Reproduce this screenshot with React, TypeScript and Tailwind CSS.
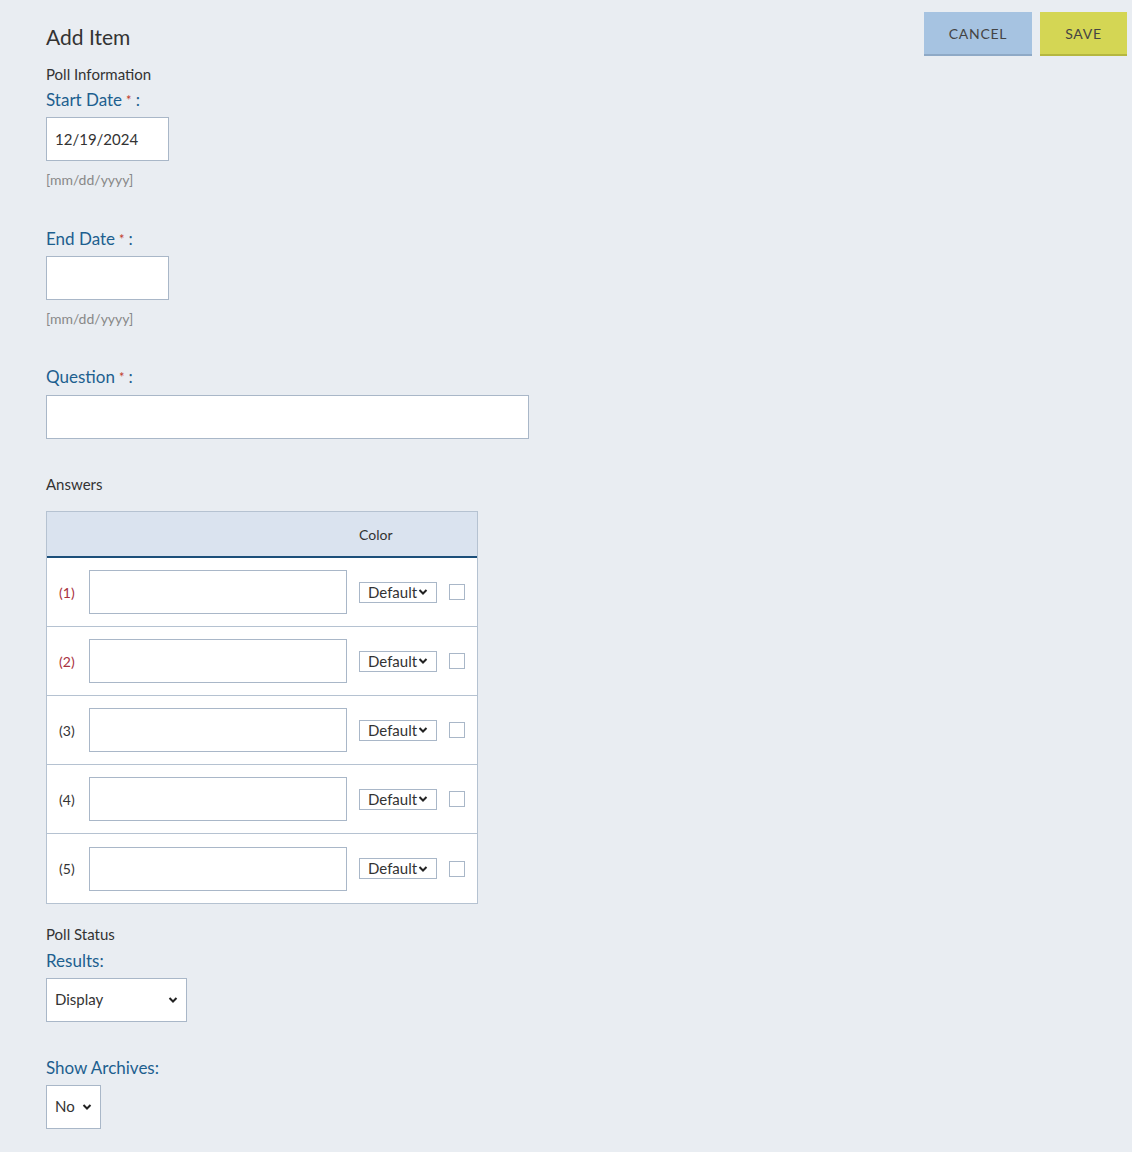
import React from "react";

const rows = [1, 2, 3, 4, 5];

function Label({ text, req }: { text: string; req?: boolean }) {
  return (
    <div className="text-[17px] leading-6 text-[#1d5f8f]">
      {text}
      {req && <span className="text-[#c0392b] text-[13px] align-top ml-1">*</span>}
      {req ? <span className="ml-1">:</span> : null}
    </div>
  );
}

export default function App() {
  return (
    <div className="min-h-[1152px] bg-[#e9edf2] text-[#333] pl-[46px] pr-[5px]" style={{ fontFamily: "Lato, 'Open Sans', sans-serif" }}>
      <div className="flex justify-between items-start pt-3">
        <h1 className="text-[21px] mt-[9px] text-[#333]">Add Item</h1>
        <div className="flex gap-2">
          <button className="w-[108px] h-11 bg-[#a6c3e1] border-b-2 border-[#8ea9c6] text-[14px] tracking-wider text-[#444]">CANCEL</button>
          <button className="w-[87px] h-11 bg-[#d4d654] border-b-2 border-[#b5b740] text-[14px] tracking-wider text-[#444]">SAVE</button>
        </div>
      </div>

      <div className="text-[15px] mt-[7px]">Poll Information</div>
      <div className="mt-[2px]"><Label text="Start Date" req /></div>
      <input defaultValue="12/19/2024" className="mt-[5px] block w-[123px] h-11 bg-white border border-[#a9b7c8] px-2 text-[15px] text-[#333]" />
      <div className="text-[14px] text-[#888] mt-2">[mm/dd/yyyy]</div>

      <div className="mt-[37px]"><Label text="End Date" req /></div>
      <input className="mt-[5px] block w-[123px] h-11 bg-white border border-[#a9b7c8]" />
      <div className="text-[14px] text-[#888] mt-2">[mm/dd/yyyy]</div>

      <div className="mt-[36px]"><Label text="Question" req /></div>
      <input className="mt-[6px] block w-[483px] h-11 bg-white border border-[#a9b7c8]" />

      <div className="text-[15px] mt-[34px]">Answers</div>
      <div className="mt-[16px] w-[432px] border border-[#b5c2d1] bg-white">
        <div className="h-[46px] bg-[#dae3ef] border-b-2 border-[#1c4f7a] flex items-center pl-[312px] text-[14px] text-[#333]">Color</div>
        {rows.map((n, i) => (
          <div key={n} className={`h-[69px] flex items-center ${i < 4 ? "border-b border-[#b5c2d1]" : ""}`}>
            <span className={`w-[42px] pl-3 text-[14px] ${n <= 2 ? "text-[#a8323e]" : "text-[#333]"}`}>({n})</span>
            <input className="w-[258px] h-11 border border-[#a9b7c8]" />
            <div className="ml-3 w-[78px] h-[21px] border border-[#a9b7c8] flex items-center justify-between px-2 text-[15px] text-[#333]">
              Default
              <svg width="10" height="8" viewBox="0 0 10 8"><path d="M1.5 2l3.5 3.5L8.5 2" stroke="#222" strokeWidth="2" fill="none" /></svg>
            </div>
            <div className="ml-3 w-4 h-4 border border-[#a9b7c8]" />
          </div>
        ))}
      </div>

      <div className="text-[15px] mt-[19px]">Poll Status</div>
      <div className="mt-[3px]"><Label text="Results:" /></div>
      <div className="mt-[5px] w-[141px] h-11 bg-white border border-[#a9b7c8] flex items-center justify-between px-2 text-[15px]">
        Display
        <svg width="10" height="8" viewBox="0 0 10 8"><path d="M1.5 2l3.5 3.5L8.5 2" stroke="#222" strokeWidth="2" fill="none" /></svg>
      </div>
      <div className="mt-[34px]"><Label text="Show Archives:" /></div>
      <div className="mt-[5px] w-[55px] h-11 bg-white border border-[#a9b7c8] flex items-center justify-between px-2 text-[15px]">
        No
        <svg width="10" height="8" viewBox="0 0 10 8"><path d="M1.5 2l3.5 3.5L8.5 2" stroke="#222" strokeWidth="2" fill="none" /></svg>
      </div>
    </div>
  );
}
